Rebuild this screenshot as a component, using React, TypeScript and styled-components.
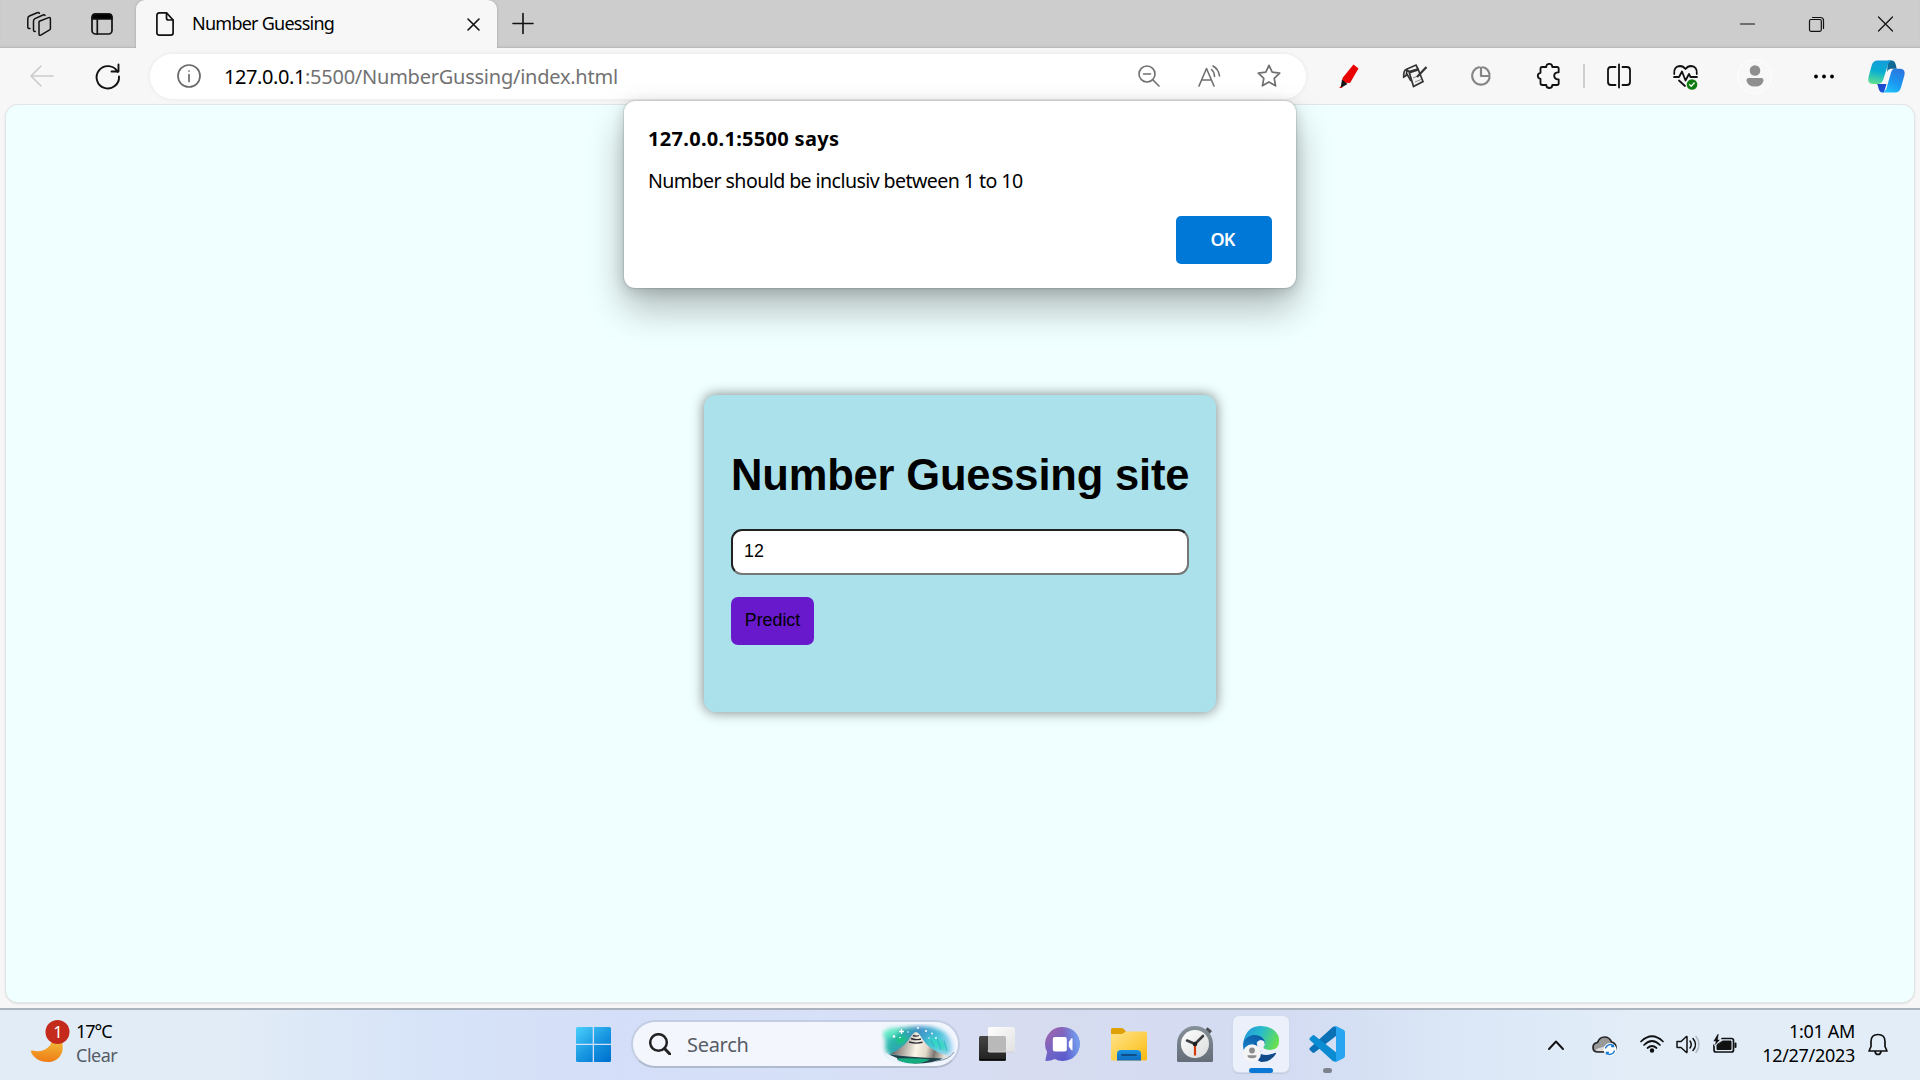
import React from "react";
import styled, { createGlobalStyle } from "styled-components";

const Global = createGlobalStyle`
  * { box-sizing: border-box; }
  body { margin: 0; overflow: hidden; background: #f7f7f7; }
`;

const ui = `"Noto Sans", "Open Sans", sans-serif`;

const Screen = styled.div`
  width: 1920px;
  height: 1080px;
  display: flex;
  flex-direction: column;
  background: #f7f7f7;
  font-family: ${ui};
  color: #000;
`;

const TabStrip = styled.header`
  height: 48px;
  flex: none;
  display: flex;
  background: #cdcdcd;
  box-shadow: inset 0 -2px 2px -1px #b5b5b5;
`;

const Slot = styled.div<{ $w: number }>`
  width: ${(p) => p.$w}px;
  height: 100%;
  flex: none;
  display: flex;
  align-items: center;
  justify-content: center;
  svg { display: block; flex: none; overflow: visible; }
`;

const StripStart = styled.div`
  width: 136px;
  padding-left: 8px;
  display: flex;
`;

const Tab = styled.div`
  width: 361px;
  height: 48px;
  display: flex;
  align-items: center;
  padding: 0 12px 0 20px;
  background: #f7f7f7;
  border-radius: 9px 9px 0 0;
  box-shadow: 0 0 3px rgba(0, 0, 0, 0.2);
  clip-path: inset(0 -4px 0 -4px);
`;

const Label = styled.span<{ $size: number; $ls?: number; $color?: string; $weight?: number; $lh?: number }>`
  font-size: ${(p) => p.$size}px;
  letter-spacing: ${(p) => p.$ls ?? 0}px;
  color: ${(p) => p.$color ?? "#000"};
  font-weight: ${(p) => p.$weight ?? 400};
  line-height: ${(p) => (p.$lh ? p.$lh + "px" : "1.3")};
  white-space: nowrap;
`;

const TabTitle = styled(Label)`
  margin-left: 18px;
  padding-bottom: 2px;
  flex: 1;
`;

const Spacer = styled.div`
  flex: 1;
`;

const Toolbar = styled.div`
  height: 56px;
  flex: none;
  display: flex;
  align-items: center;
  padding-left: 9px;
`;

const AddressBar = styled.div`
  width: 1156px;
  height: 45px;
  margin-left: 9px;
  margin-right: 10px;
  padding: 0 7px 0 9px;
  display: flex;
  align-items: center;
  background: #fff;
  border-radius: 23px;
  box-shadow: 0 0 5px rgba(0, 0, 0, 0.07);
`;

const Url = styled.div`
  flex: 1;
  padding: 1px 0 0 5px;
  display: flex;
`;

const Divider = styled.div`
  width: 2px;
  height: 24px;
  margin: 0 3px 0 2px;
  background: #cfcfcf;
`;

const Avatar = styled.div`
  width: 35px;
  height: 35px;
  flex: none;
  display: flex;
  align-items: center;
  justify-content: center;
  border-radius: 50%;
  background: #f8f8f8;
  border: 1px solid #fff;
`;

const Page = styled.main`
  position: relative;
  height: 897px;
  flex: none;
  margin: 1px 6px 0 6px;
  border-radius: 12px;
  background: #f0ffff;
  box-shadow: 0 0 0 1px #e3e6e6, 0 1px 3px rgba(0, 0, 0, 0.2);
  display: flex;
  align-items: center;
  justify-content: center;
`;

const Dialog = styled.section`
  position: absolute;
  top: -4px;
  left: 618px;
  width: 672px;
  height: 187px;
  padding: 24px 24px 0;
  display: flex;
  flex-direction: column;
  background: #fff;
  border-radius: 11px;
  box-shadow: 0 0 2px rgba(0, 0, 0, 0.35), 0 20px 38px rgba(0, 0, 0, 0.28), 0 3px 14px rgba(0, 0, 0, 0.16);
`;

const Message = styled(Label)`
  margin-top: 14px;
`;

const OkButton = styled.button`
  align-self: flex-end;
  margin-top: 21px;
  width: 96px;
  height: 48px;
  flex: none;
  border: 0;
  border-radius: 5px;
  background: #0078d7;
  color: #fff;
  font: 600 18px/24px ${ui};
  letter-spacing: -0.8px;
  padding: 0 3px 2px 0;
`;

const Card = styled.form`
  width: 512px;
  height: 317px;
  padding: 55px 27px 0;
  display: flex;
  flex-direction: column;
  align-items: flex-start;
  background: #abe1ea;
  border-radius: 12px;
  box-shadow: 0 0 13px rgba(0, 0, 0, 0.5);
  font-family: "Liberation Sans", Arial, sans-serif;
`;

const Heading = styled.h1`
  margin: 0;
  font-size: 43.5px;
  line-height: 50px;
  letter-spacing: -0.17px;
  white-space: nowrap;
`;

const GuessInput = styled.input`
  width: 458px;
  height: 46px;
  margin-top: 29px;
  padding: 0 11px 2px;
  border: 2px inset #767676;
  border-radius: 11px;
  background: #fff;
  color: #000;
  font: 17.8px "Liberation Sans", Arial, sans-serif;
  outline: none;
`;

const PredictButton = styled.button`
  width: 83px;
  height: 48px;
  margin-top: 22px;
  padding: 0 0 1px;
  border: 0;
  border-radius: 7px;
  background: #6719cb;
  color: #000;
  font: 17.8px "Liberation Sans", Arial, sans-serif;
`;

const Taskbar = styled.footer`
  height: 72px;
  flex: none;
  margin-top: 6px;
  display: flex;
  border-top: 2px solid #abb3be;
  background: linear-gradient(90deg, #e2ecf7 0, #e2ecf7 230px, #d7e4f8 420px, #d5def8 620px, #d6e0f7 820px, #d7dcf0 1030px, #d3dcf2 1290px, #dce8f7 1480px, #e2edf8 1640px, #e2edf8 100%);
`;

const Weather = styled.div`
  width: 560px;
  padding: 0 0 0 28px;
  display: flex;
`;

const WeatherText = styled.div`
  display: flex;
  flex-direction: column;
  padding: 9px 0 0 8px;
`;

const SearchBox = styled.div`
  width: 329px;
  height: 48px;
  margin: 10px 4px 0 4px;
  padding: 0 1px 0 16px;
  display: flex;
  align-items: center;
  flex: none;
  border: 2px solid #c3cde3;
  border-bottom-color: #b1bbd0;
  border-radius: 24px;
  background: #f3f6fd;
`;

const SearchText = styled(Label)`
  flex: 1;
  margin-left: 16px;
  padding-top: 1px;
`;

const AppSlot = styled.div<{ $active?: boolean }>`
  width: 56px;
  height: 56px;
  margin: 6px 5px 0;
  flex: none;
  display: flex;
  flex-direction: column;
  align-items: center;
  padding-top: 10px;
  border-radius: 6px;
  background: ${(p) => (p.$active ? "#ebf0fa" : "transparent")};
  box-shadow: ${(p) => (p.$active ? "0 0 0 1px #d0dbee, 0 1px 1px 1px #c2cbdc" : "none")};
  svg { display: block; flex: none; overflow: visible; }
`;

const Indicator = styled.div<{ $w: number; $c: string }>`
  width: ${(p) => p.$w}px;
  height: 5px;
  flex: none;
  margin-top: 6px;
  border-radius: 3px;
  background: ${(p) => p.$c};
`;

const Clock = styled.div`
  width: 106px;
  padding: 9px 0 0;
  display: flex;
  flex-direction: column;
  align-items: flex-end;
`;

type LineProps = { w: number; h: number; c?: string; s?: number; children: React.ReactNode };
const Line = ({ w, h, c = "#111", s = 1.6, children }: LineProps) => (
  <svg width={w} height={h} viewBox={`0 0 ${w} ${h}`} fill="none" stroke={c} strokeWidth={s} strokeLinecap="round" strokeLinejoin="round">
    {children}
  </svg>
);

const Workspaces = () => (
  <Line w={24} h={24} s={1.5}>
    <path d="M12.3 9.3 21.6 5.6q1.8-.6 1.8 1.2v9.6q0 1.2-1.2 1.8l-8 4.7q-2.2 1.2-2.2-1V10.2q0-.6.3-.9Z" />
    <path d="M8.3 19.5q-1.8.4-1.8-1.7V9q0-1.7 1.5-2.4l8-3.6q1.4-.6 2 .4" />
    <path d="M3 16.5Q.8 17 .8 14.8V6.7q0-1.9 1.6-2.7L10.2.8q1.5-.6 2.2.5" />
  </Line>
);

const TabActions = () => (
  <Line w={22} h={22} s={1.7}>
    <rect x="1" y="1" width="20" height="20" rx="3.5" />
    <path d="M1.5 2.5Q2 1 4 1h14q2.5 0 2.7 2.5V6H1.3Z" fill="#000" />
    <path d="M6.3 6v15" />
  </Line>
);

const Puzzle = () => (
  <Line w={24} h={26} s={1.8}>
    <path d="M4.500 5.500q0-1.500 1.500-1.500h4.300q0-3.200 3-3.200t3 3.200H21q1.700 0 1.700 1.700v3.600h-1.200q-3.300.3-3.300 3.500t3.300 3.500h1.200v4q0 1.700-1.700 1.700h-4.700q0 3-3 3t-3-3H6.200q-1.700 0-1.700-1.700v-4.500Q1.800 15.500 1.800 12.800t2.700-3Z" />
  </Line>
);

const Copilot = () => (
  <svg width="37" height="33" viewBox="0 0 37 33">
    <defs>
      <linearGradient id="cpA" x1="0.5" y1="0" x2="0.3" y2="1">
        <stop offset="0" stopColor="#149cd8" />
        <stop offset="0.45" stopColor="#08aed2" />
        <stop offset="1" stopColor="#5fdf91" />
      </linearGradient>
      <linearGradient id="cpB" x1="0.8" y1="0" x2="0.3" y2="1">
        <stop offset="0" stopColor="#2b74dd" />
        <stop offset="0.6" stopColor="#1a9af2" />
        <stop offset="1" stopColor="#1dc2fb" />
      </linearGradient>
      <linearGradient id="cpC" x1="0" y1="0" x2="1" y2="1">
        <stop offset="0" stopColor="#12719d" />
        <stop offset="1" stopColor="#0c5f8c" />
      </linearGradient>
      <linearGradient id="cpD" x1="0" y1="0" x2="1" y2="1">
        <stop offset="0" stopColor="#1c3fc4" />
        <stop offset="1" stopColor="#1d5be0" />
      </linearGradient>
    </defs>
    <path d="M20 .5h3.500q3.200 0 4.200 4l1 4.200H23q-2.500 0-4 3.300Z" fill="url(#cpC)" />
    <path d="M9 24h9.500l-2.500 8.500h-1.500q-3 0-4-4.200Q10 25 9 24Z" fill="url(#cpD)" />
    <path d="M9.500.5H24q-3 .6-4.200 4.500L15.300 19.500Q13.800 24 9.500 24H4.500Q-.8 24 .4 17.500L3.800 5Q5.200.5 9.500.5Z" fill="url(#cpA)" />
    <path d="M26.500 8.700h5.700q5.600.3 4.200 6.500l-3.300 12q-1.600 5.300-6.100 5.300H14.300q3.100-.6 4.300-4.500l4.400-15.500Q24.200 8.700 26.500 8.700Z" fill="url(#cpB)" />
  </svg>
);

const Moon = () => (
  <svg width="40" height="50" viewBox="0 0 40 50">
    <defs>
      <linearGradient id="moon" x1="0.5" y1="0" x2="0.4" y2="1">
        <stop offset="0" stopColor="#f2bd39" />
        <stop offset="1" stopColor="#ef7b16" />
      </linearGradient>
    </defs>
    <path d="M34 22C37 34 30 42 20 42 11 42 5 37 3 32q-.5-2 1.500-1.500C15 33 23 28 24.500 19Z" fill="url(#moon)" />
    <circle cx="29.500" cy="12" r="12" fill="#c42b1c" />
    <text x="30" y="17.500" textAnchor="middle" fontFamily="Noto Sans, sans-serif" fontSize="16.5" fill="#fff">1</text>
  </svg>
);

const WindowsLogo = () => (
  <svg width="35" height="37" viewBox="0 0 35 37">
    <defs>
      <linearGradient id="win" gradientUnits="userSpaceOnUse" x1="0" y1="0" x2="30" y2="35">
        <stop offset="0" stopColor="#4bd0fc" />
        <stop offset="0.6" stopColor="#1593df" />
        <stop offset="1" stopColor="#0173cf" />
      </linearGradient>
    </defs>
    <path fill="url(#win)" d="M1.500 0H16.700V16.700H0V1.500Q0 0 1.500 0ZM18 0h15.500Q35 0 35 1.500V16.700H18ZM0 18h16.700v17H1.500Q0 35 0 33.500ZM18 18h17v15.500q0 1.500-1.500 1.500H18Z" />
  </svg>
);

const SearchArt = () => (
  <svg width="76" height="40" viewBox="0 0 76 40">
    <defs>
      <linearGradient id="sky" x1="0" y1="0" x2="1" y2="0.3">
        <stop offset="0" stopColor="#5fd8d8" />
        <stop offset="0.25" stopColor="#27b3a8" />
        <stop offset="0.5" stopColor="#3f8fc6" />
        <stop offset="0.8" stopColor="#46c3da" />
        <stop offset="1" stopColor="#9bd0f3" />
      </linearGradient>
      <linearGradient id="hill" x1="0" y1="0" x2="1" y2="0.1">
        <stop offset="0" stopColor="#3c3d44" />
        <stop offset="0.25" stopColor="#a19b95" />
        <stop offset="0.5" stopColor="#fbf6e8" />
        <stop offset="0.68" stopColor="#e0d7c8" />
        <stop offset="0.82" stopColor="#7d7672" />
        <stop offset="1" stopColor="#e6e0d6" />
      </linearGradient>
      <filter id="soft" x="-20%" y="-20%" width="140%" height="140%"><feGaussianBlur stdDeviation="1.9" /></filter>
    </defs>
    <g filter="url(#soft)">
      <path d="M4 9Q12 3 22 4q14-3 28-1 15 3 20 13 3 9 0 14-12 6-31 7-22 1-31-6-6-7-3-13Q2 13 4 9Z" fill="url(#sky)" />
      <path d="M2 9Q10 1 20 6q-6 6-13 8-6-1-5-5Z" fill="#62e9c6" />
      <path d="M14 14q8-3 15 0l-10 8Z" fill="#17c67c" />
      <path d="M45 15q10-3 20 3l3 11-14-5Z" fill="#35d6c4" />
    </g>
    <path d="M50 16l3 7m3-9 4 12m3-9 3 10" stroke="#2fa6cc" strokeWidth="1.2" opacity=".6" />
    <path d="M9 30Q22 24 28 15.500 32 8 35 8q2.500 0 6 6.500Q48 26 64 31q3 1 4 2-14 3-30 1-15-1-29-4Z" fill="url(#hill)" />
    <path d="M32 11.500q3.500 1.300 6 0M30 14.500q5 2 10 .5M28 18q7 2 13.500.3" stroke="#2f2e38" strokeWidth="1.4" fill="none" />
    <path d="M8 30.500q18 2.500 54 4-10 5-28 5-17-1-26-9Z" fill="#20404a" />
    <path d="M15 34.500q18-1 34 1-7 4-16 4-11 0-18-5Z" fill="#14ad80" />
    <path d="M4 29q3 7 13 10l-1-5Zm48 9q14-1 22-10-1 8-16 12Z" fill="#edf3fa" />
    <path d="M73 28q-5 8-18 9" stroke="#7f92a3" strokeWidth="1" fill="none" />
    <path d="M20.500 5v5m-2.500-2.500h5" stroke="#fff" strokeWidth="1.3" />
    <g fill="#fff"><circle cx="13" cy="12.500" r="1.300" /><circle cx="27" cy="8" r=".8" /><circle cx="37" cy="4" r="1" /><circle cx="45" cy="7" r="1.100" /><circle cx="51" cy="9.500" r=".9" /><circle cx="55" cy="14" r=".9" /><circle cx="19" cy="13.500" r=".8" /><circle cx="48" cy="14" r=".7" /></g>
  </svg>
);

const TaskView = () => (
  <svg width="36" height="36" viewBox="0 0 36 36">
    <defs>
      <linearGradient id="tvD" x1="0" y1="0" x2="0" y2="1"><stop offset="0" stopColor="#454545" /><stop offset="1" stopColor="#202020" /></linearGradient>
      <linearGradient id="tvL" x1="0" y1="0" x2="1" y2="1"><stop offset="0" stopColor="#fff" /><stop offset="1" stopColor="#e1e1e1" /></linearGradient>
    </defs>
    <rect x="0" y="10" width="27" height="25" rx="1.5" fill="url(#tvD)" />
    <path d="M0 33.500h27" stroke="#080808" />
    <rect x="9" y="1" width="27" height="25" rx="1.5" fill="url(#tvL)" />
    <path d="M9 10h16.500q1.500 0 1.500 1.500V26H10.500Q9 26 9 24.500Z" fill="#b9b9b9" />
    <path d="M9 24.500Q9 26 10.500 26h24" stroke="#d0d0d0" fill="none" />
  </svg>
);

const Chat = () => (
  <svg width="36" height="36" viewBox="0 0 36 36">
    <defs>
      <linearGradient id="chat" x1="0.1" y1="0.2" x2="0.8" y2="0.9">
        <stop offset="0" stopColor="#9765b1" /><stop offset="0.5" stopColor="#6d63c8" /><stop offset="1" stopColor="#5558cd" />
      </linearGradient>
      <linearGradient id="chatR" x1="0" y1="0.3" x2="1" y2="0.2"><stop offset="0.5" stopColor="#7ba4ee" stopOpacity="0" /><stop offset="1" stopColor="#78a8f2" /></linearGradient>
    </defs>
    <g transform="translate(-0.7 0)">
      <path d="M18.500 1a17 17 0 1 1-8 32q-4 2-8.500 2-1.500-.2-.8-1.500l1.600-7.500A17 17 0 0 1 18.500 1Z" fill="url(#chat)" />
      <circle cx="18.500" cy="18" r="17" fill="url(#chatR)" />
      <rect x="8.500" y="11" width="14" height="14.500" rx="2" fill="#fff" />
      <path d="M24.500 16l2.500-3.500q1.200-1 1.200.5v10.500q0 1.500-1.200.5L24.500 20.500Z" fill="#fff" />
    </g>
  </svg>
);

const Folder = () => (
  <svg width="36" height="36" viewBox="0 0 36 36">
    <defs>
      <linearGradient id="fol" x1="0" y1="0" x2="1" y2="1"><stop offset="0" stopColor="#ffe28a" /><stop offset="0.5" stopColor="#fdd14f" /><stop offset="1" stopColor="#fcb80f" /></linearGradient>
      <linearGradient id="folB" x1="0" y1="0" x2="0" y2="1"><stop offset="0" stopColor="#1793e4" /><stop offset="1" stopColor="#0f6cc0" /></linearGradient>
    </defs>
    <path d="M1.500 2H10q2 0 3 1.300L15 5.500V10H0V3.500Q0 2 1.500 2Z" fill="#dfa008" />
    <path d="M0 8h10q2 0 3-1.200t3-1.300h18.500q1.500 0 1.500 1.500v26q0 1.500-1.500 1.500h-33Q0 34.500 0 33Z" fill="url(#fol)" />
    <path d="M6 34.500V28q0-4 4-4h16q4 0 4 4v6.500Z" fill="url(#folB)" />
    <path d="M11 29h14" stroke="#124c86" strokeWidth="1.8" strokeLinecap="round" />
  </svg>
);

const ClockApp = () => (
  <svg width="36" height="36" viewBox="0 0 36 36">
    <defs>
      <linearGradient id="clk" x1="0" y1="0" x2="0" y2="1"><stop offset="0" stopColor="#869098" /><stop offset="1" stopColor="#656e78" /></linearGradient>
      <linearGradient id="clf" x1="0" y1="0" x2="1" y2="1"><stop offset="0" stopColor="#fff" /><stop offset="1" stopColor="#dadbdc" /></linearGradient>
    </defs>
    <path d="m28.500 3.500 2-2.200 4.500 3.700-2.500 3Z" fill="#4b4f54" />
    <path d="M18 0a18 18 0 0 1 18 18v16.500q0 1.500-1.500 1.500h-33Q0 36 0 34.500V18A18 18 0 0 1 18 0Z" fill="url(#clk)" />
    <circle cx="18" cy="18" r="14" fill="url(#clf)" />
    <path d="M18 19v10.500" stroke="#d83b0b" strokeWidth="2.2" />
    <path d="M10 14.500 18 18l8-8" stroke="#393d41" strokeWidth="2.6" fill="none" strokeLinecap="round" />
    <circle cx="18" cy="18" r="2.3" fill="#1d1f21" />
  </svg>
);

const Edge = () => (
  <svg width="36" height="36" viewBox="0 0 36 36">
    <defs>
      <linearGradient id="edT" x1="0" y1="0.3" x2="1" y2="0.6"><stop offset="0" stopColor="#2398dc" /><stop offset="0.45" stopColor="#29bccb" /><stop offset="1" stopColor="#6be14b" /></linearGradient>
      <linearGradient id="edL" x1="0.6" y1="0" x2="0.3" y2="1"><stop offset="0" stopColor="#0d5ca5" /><stop offset="1" stopColor="#1a92dc" /></linearGradient>
    </defs>
    <path d="M0 18Q1 9 11 8.500q9 0 11.500 6.500L14 34Q0 33 0 18Z" fill="url(#edL)" />
    <path d="M13.500 15.500Q11 24 18 28q6 2.500 13.500-1.300 2-.7 1.500 1Q28 36 18 36 10 33 10.500 24q.5-5 3-8.500Z" fill="#114a8b" />
    <path d="M13.700 16.500Q17 12 21.500 15.500 19.500 22 26 24.500q4 1 7-.5v2.500q-4 2-9 1.500-10-2-10.300-11.500Z" fill="#ebf0fa" />
    <path d="M.3 16.500Q3 0 18 0q12.500 0 17.500 10 3 13.500-9 14-6.500-.3-6-3 1.500-1.500 1.500-4Q21 9 11 9 3 10 .3 16.500Z" fill="url(#edT)" />
    <circle cx="9" cy="27.300" r="9" fill="#f4f4f4" />
    <circle cx="9" cy="24.500" r="2.900" fill="#8c8c8c" />
    <path d="M4.500 29.200h9q.5 3-4.500 3t-4.500-3Z" fill="#8c8c8c" />
  </svg>
);

const VsCode = () => (
  <svg width="36" height="36" viewBox="0 0 36 36">
    <path d="M27 .5V10L5.500 26.500q-1 .8-2 0L.8 24q-1-1 0-2L24 .8Z" fill="#0a71b6" />
    <path d="M27 35.500V26.200L5.500 9.500q-1-.8-2 0L.8 12q-1 1 0 2L24 35.200Z" fill="#0b8bd2" />
    <path d="M25 .2Q26.300-.3 27.500.3l7 3.400Q36 4.500 36 6v24q0 1.500-1.500 2.300l-7 3.400q-1.200.6-2.500.1 1.800-.2 2-2.300v-31Q26.800.4 25 .2Z" fill="#27a5f0" />
  </svg>
);

export default function App() {
  return (
    <Screen>
      <Global />
      <TabStrip>
        <StripStart>
          <Slot $w={62}><Workspaces /></Slot>
          <Slot $w={64}><TabActions /></Slot>
        </StripStart>
        <Tab>
          <Line w={18} h={24} s={1.7}>
            <path d="M3.300.9h7.200L17.100 8v12.700q0 2.400-2.400 2.400H3.300Q.9 23.100.9 20.700V3.300Q.9.9 3.300.9" />
            <path d="M10.500 1v5q0 2 2 2H17" />
          </Line>
          <TabTitle $size={18} $ls={-0.75} $lh={24}>Number Guessing</TabTitle>
          <Slot $w={24}><Line w={13} h={13} s={1.6}><path d="M1 1l11 11M12 1 1 12" /></Line></Slot>
        </Tab>
        <Slot $w={51}><Line w={22} h={22} s={1.6}><path d="M11 .5v20M1 10.500h20" /></Line></Slot>
        <Spacer />
        <Slot $w={70}><Line w={15} h={15} s={1.2}><path d="M.5 7h14" /></Line></Slot>
        <Slot $w={68}><Line w={15} h={15} s={1.2}><rect x=".5" y="2.500" width="11.800" height="11.800" rx="1.5" /><path d="M3.500.5h8Q14.500.5 14.500 3.500v8" /></Line></Slot>
        <Slot $w={70}><Line w={15} h={15} s={1.2}><path d="M.5 0l14 14M14.500 0l-14 14" /></Line></Slot>
      </TabStrip>

      <Toolbar>
        <Slot $w={66}><Line w={24} h={22} c="#cbcbcb" s={1.6}><path d="M23 11H1M11 1 1 11l10 10" /></Line></Slot>
        <Slot $w={66}><Line w={24} h={25} s={1.9}><path d="M21.700 8A11.200 11.200 0 1 0 23 12.500M22.500 .5v7H15.500" /></Line></Slot>
        <AddressBar>
          <Slot $w={60}><Line w={24} h={24} c="#6b6b6b" s={1.7}><circle cx="12" cy="12" r="11" /><path d="M12 10.500v7M12 7v.1" /></Line></Slot>
          <Url>
            <Label $size={20} $ls={-0.42}>127.0.0.1</Label>
            <Label $size={20} $ls={-0.24} $color="#727272">:5500/NumberGussing/index.html</Label>
          </Url>
          <Slot $w={60}><Line w={22} h={22} c="#6f6f6f" s={1.6}><circle cx="9" cy="9" r="8" /><path d="M5.500 9h7M15 15l6 6" /></Line></Slot>
          <Slot $w={60}><Line w={23} h={22} c="#6f6f6f" s={1.6}><path d="M1 21 8.500 3.500 16 21M3.800 15h9.600M13.500 4.500q3 2.500 3 7M15 1q5.500 3 6.500 10" /></Line></Slot>
          <Slot $w={60}><Line w={24} h={24} c="#6f6f6f" s={1.7}><path d="m12 1.300 3.200 6.900 7.500.9-5.500 5.200 1.400 7.500L12 18.100l-6.600 3.700 1.400-7.500L1.300 9.100l7.500-.9Z" /></Line></Slot>
        </AddressBar>
        <Slot $w={65}>
          <svg width="20" height="25" viewBox="0 0 20 25"><path d="M14.500.5 19.500 4.500 11 19l-8-.5.500-4.500Z" fill="#e90000" /><path d="m3 15.500 5.500 4.500-6 3.500q-1.500-.5-.5-2Z" fill="#151515" /><path d="M1 22.500 4 24H.5Z" fill="#e90000" /></svg>
        </Slot>
        <Slot $w={67}>
          <svg width="24" height="24" viewBox="0 0 24 24" fill="none" stroke="#333" strokeWidth="1.7"><path d="m6 7.500 9-2.500 5 12.500-9.500 5Z" fill="#f2f2f2" /><path d="M3 5.500 13 1l2 4M3 5.500q-2.500 1-2.300 7.500l2.500-1.500L4 6M3 5.500l3 2M4 10l4 7" /><path d="m6.500 8.500 9-3" strokeWidth="2.2" /><path d="m10 14 5-2M12 18l6-2.500" strokeWidth="1" stroke="#888" /><path d="M23.500 3 14 13" strokeWidth="2.2" /></svg>
        </Slot>
        <Slot $w={66}><Line w={20} h={20} c="#858585" s={2.2}><path d="M8 1.300a8.800 8.800 0 1 0 10.600 10.200M12 1.300a8.800 8.800 0 0 1 6.500 7M10 1.500V10h8.500" /></Line></Slot>
        <Slot $w={67}><Puzzle /></Slot>
        <Divider />
        <Slot $w={62}><Line w={24} h={24} s={1.8}><path d="M8.500 3H4Q1 3 1 6v12q0 3 3 3h4.500M15.500 3H20q3 0 3 3v12q0 3-3 3h-4.500M12 .5v23" /></Line></Slot>
        <Slot $w={71}>
          <Line w={25} h={25} s={1.8}>
            <path d="M1.200 10Q.5 2.500 7 2q3.300 0 5.500 3 2.200-3 5.500-3 6.500.5 5.800 8M1 13h5l3-5.500 3.500 9L16 10l1.500 3H24M6 16.500l6 5.500" />
            <circle cx="19" cy="20.500" r="5.300" fill="#107c10" stroke="none" /><path d="m16.700 20.700 1.500 1.500 3-3.200" stroke="#fff" strokeWidth="1.3" />
          </Line>
        </Slot>
        <Slot $w={67}><Avatar><svg width="18" height="22" viewBox="0 0 18 22" fill="#8f8f8f"><circle cx="9" cy="5.500" r="5.300" /><path d="M2.500 13h13q2 0 2 2.200Q16.500 21.500 9 21.500T.5 15.200Q.5 13 2.500 13Z" /></svg></Avatar></Slot>
        <Slot $w={72}><svg width="20" height="4" viewBox="0 0 20 4"><circle cx="2" cy="2.500" r="1.900" /><circle cx="10" cy="2.500" r="1.900" /><circle cx="18" cy="2.500" r="1.900" /></svg></Slot>
        <Slot $w={52}><Copilot /></Slot>
      </Toolbar>

      <Page>
        <Card onSubmit={(e) => e.preventDefault()}>
          <Heading>Number Guessing site</Heading>
          <GuessInput defaultValue="12" />
          <PredictButton type="submit">Predict</PredictButton>
        </Card>
        <Dialog role="alertdialog">
          <Label $size={20} $ls={0.3} $weight={700} $lh={28}>127.0.0.1:5500 says</Label>
          <Message $size={19.6} $ls={-0.58} $lh={28}>Number should be inclusiv between 1 to 10</Message>
          <OkButton>OK</OkButton>
        </Dialog>
      </Page>

      <Taskbar>
        <Weather>
          <Slot $w={40}><Moon /></Slot>
          <WeatherText>
            <Label $size={18} $ls={-1} $lh={24}>17°C</Label>
            <Label $size={18} $ls={-0.5} $lh={24} $color="#555c66">Clear</Label>
          </WeatherText>
        </Weather>
        <Slot $w={67}><WindowsLogo /></Slot>
        <SearchBox>
          <Line w={22} h={22} c="#222" s={2.5}><circle cx="9.500" cy="9.500" r="8.300" /><path d="m15.500 15.500 5.300 5.500" strokeWidth="3" /></Line>
          <SearchText $size={20} $ls={-0.3} $color="#575c65">Search</SearchText>
          <SearchArt />
        </SearchBox>
        <AppSlot><TaskView /></AppSlot>
        <AppSlot><Chat /></AppSlot>
        <AppSlot><Folder /></AppSlot>
        <AppSlot><ClockApp /></AppSlot>
        <AppSlot $active><Edge /><Indicator $w={24} $c="#0a78d4" /></AppSlot>
        <AppSlot><VsCode /><Indicator $w={9} $c="#7d838d" /></AppSlot>
        <Spacer />
        <Slot $w={48}><Line w={16} h={9} s={1.9}><path d="m1 8 7-7.500 7 7.500" /></Line></Slot>
        <Slot $w={48}>
          <svg width="25" height="20" viewBox="0 0 25 20"><path d="M6 17Q1 17 1 12.500 1 8 5.500 7.500 7.500 2 12.500 2t7 5Q24 8 24 12.500T19 17Z" fill="#999" stroke="#252525" strokeWidth="1.7" /><path d="M3 15q3-2 8-3l10-3q3 5-2 7H6Z" fill="#ddd" /><circle cx="18" cy="14.500" r="6.500" fill="#fff" /><path d="M13.500 13.500a4.700 4.700 0 0 1 8-2.500v-1.500M22.500 15.500a4.700 4.700 0 0 1-8 2.500v1.500M21.800 11.500H19M14.200 17.500h2.800" fill="none" stroke="#1578d3" strokeWidth="1.4" /></svg>
        </Slot>
        <Slot $w={48}><Line w={24} h={20} s={1.7}><path d="M1 6.500Q12-4 23 6.500M4 10Q12 2 20 10M7.500 13q4.500-4 9 0" /><circle cx="12" cy="15.500" r="1.400" fill="#111" /></Line></Slot>
        <Slot $w={24}><Line w={24} h={20} s={1.5}><path d="M1 6.500h4l5.500-5q.5-.3.500.5v15q0 .8-.5.5l-5.500-5H1.500Q1 12.500 1 12Z" /><path d="M14 6q2.500 3.500 0 7M17 3.500q5 6 0 12" /><path d="M20 1.500q6 8 0 16" stroke="#aeb8c5" /></Line></Slot>
        <Slot $w={49}>
          <Line w={25} h={22} s={1.7}><path d="M10 4.500h9.500q2 0 2 2V16q0 2-2 2H4q-2 0-2-2v-5" /><path d="M11 7h8v8.500H5V11Z" fill="#111" strokeWidth="1" /><path d="M23.500 9.500v3.500" strokeWidth="2" /><path d="M5.500 0 1 7.500h2.500L2.500 12 8.500 5.500H6L7 0Z" fill="#111" stroke="#e2edf8" strokeWidth=".6" /></Line>
        </Slot>
        <Clock>
          <Label $size={18} $ls={-0.32} $lh={24}>1:01 AM</Label>
          <Label $size={18} $ls={-0.3} $lh={24}>12/27/2023</Label>
        </Clock>
        <Slot $w={45}><Line w={20} h={22} s={1.7}><path d="M1 17h18l-2-4.500V7.500q0-7-7-7T3 7.500v5ZM7 17.500q.5 3 3 3t3-3" /></Line></Slot>
        <Slot $w={20} />
      </Taskbar>
    </Screen>
  );
}
